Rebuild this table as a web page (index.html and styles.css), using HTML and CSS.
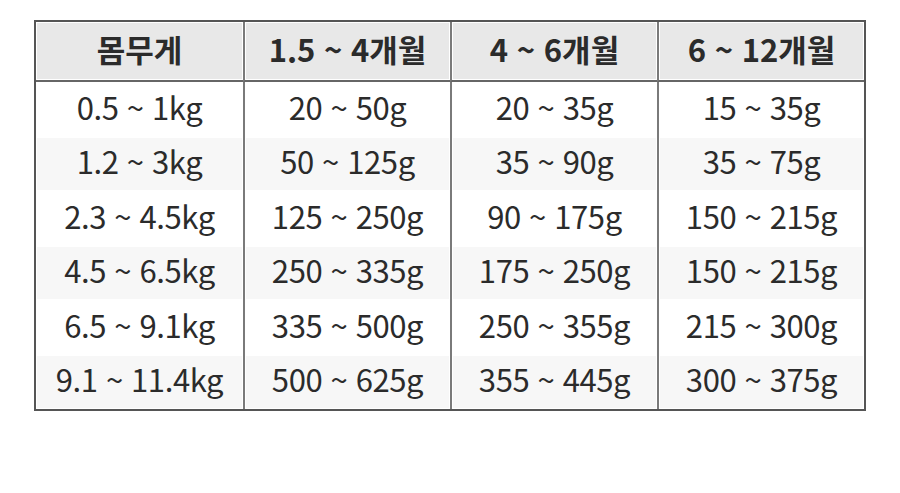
FILE: index.html
```html
<!DOCTYPE html>
<html lang="ko">
<head>
<meta charset="utf-8">
<link rel="stylesheet" href="styles.css">
</head>
<body>
<table class="feed">
  <thead>
    <tr class="head-row"><th>몸무게</th><th>1.5 ~ 4개월</th><th>4 ~ 6개월</th><th>6 ~ 12개월</th></tr>
  </thead>
  <tbody>
    <tr><td>0.5 ~ 1kg</td><td>20 ~ 50g</td><td>20 ~ 35g</td><td>15 ~ 35g</td></tr>
    <tr><td>1.2 ~ 3kg</td><td>50 ~ 125g</td><td>35 ~ 90g</td><td>35 ~ 75g</td></tr>
    <tr><td>2.3 ~ 4.5kg</td><td>125 ~ 250g</td><td>90 ~ 175g</td><td>150 ~ 215g</td></tr>
    <tr><td>4.5 ~ 6.5kg</td><td>250 ~ 335g</td><td>175 ~ 250g</td><td>150 ~ 215g</td></tr>
    <tr><td>6.5 ~ 9.1kg</td><td>335 ~ 500g</td><td>250 ~ 355g</td><td>215 ~ 300g</td></tr>
    <tr><td>9.1 ~ 11.4kg</td><td>500 ~ 625g</td><td>355 ~ 445g</td><td>300 ~ 375g</td></tr>
  </tbody>
</table>
</body>
</html>
```

FILE: styles.css
```css
html, body {
  margin: 0;
  padding: 0;
  background: #fff;
}
body {
  padding: 20px 0 0 34px;
  font-family: "Noto Sans CJK KR", "Noto Sans", sans-serif;
  color: #2b2b2b;
}
.feed {
  width: 832px;
  table-layout: fixed;
  border-collapse: separate;
  border-spacing: 0;
  border: 2px solid #555;
}
.feed tr {
  height: 54.5px;
}
.feed .head-row {
  height: 60px;
}
.feed th, .feed td {
  text-align: center;
  vertical-align: middle;
  padding: 0 0 6px;
  box-shadow: inset 0 0 0 1px #fff;
}
.feed th + th, .feed td + td {
  border-left: 2px solid #7a7a7a;
}
.feed th {
  background: #e8e8e8;
  font-size: 31px;
  font-weight: 700;
  border-bottom: 2px solid #666;
}
.feed td {
  font-size: 31px;
  letter-spacing: -0.4px;
  font-weight: 400;
}
.feed tbody tr:nth-child(even) td {
  background: #f7f7f7;
}
```
